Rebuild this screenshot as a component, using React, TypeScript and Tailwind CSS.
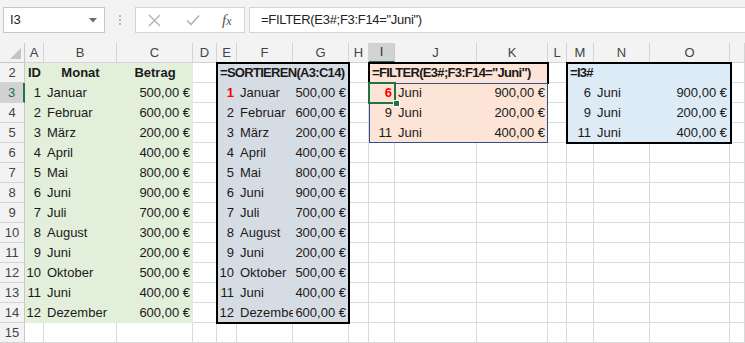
import React from "react";
import clsx from "clsx";

const COLS = ["A", "B", "C", "D", "E", "F", "G", "H", "I", "J", "K", "L", "M", "N", "O", ""];

const MONTHS: [number, string, string][] = [
  [1, "Januar", "500,00 €"],
  [2, "Februar", "600,00 €"],
  [3, "März", "200,00 €"],
  [4, "April", "400,00 €"],
  [5, "Mai", "800,00 €"],
  [6, "Juni", "900,00 €"],
  [7, "Juli", "700,00 €"],
  [8, "August", "300,00 €"],
  [9, "Juni", "200,00 €"],
  [10, "Oktober", "500,00 €"],
  [11, "Juni", "400,00 €"],
  [12, "Dezember", "600,00 €"],
];

const FILTERED: [number, string, string][] = [
  [6, "Juni", "900,00 €"],
  [9, "Juni", "200,00 €"],
  [11, "Juni", "400,00 €"],
];

type Cell = {
  text?: React.ReactNode;
  align?: "left" | "right" | "center";
  bold?: boolean;
  span3?: boolean;
  tight?: boolean;
};

function fillFor(col: number, row: number): string | null {
  if (col <= 2 && row >= 2 && row <= 14) return "bg-[#e2efda]";
  if (col >= 4 && col <= 6 && row >= 2 && row <= 14) return "bg-[#d6dce4]";
  if (col >= 8 && col <= 10 && row >= 2 && row <= 5) return "bg-[#fce4d6]";
  if (col >= 12 && col <= 14 && row >= 2 && row <= 5) return "bg-[#ddebf7]";
  return null;
}

function Red({ children }: { children: React.ReactNode }) {
  return <span className="font-bold text-[#ff0000]">{children}</span>;
}

function cellsFor(row: number): Record<number, Cell> {
  const c: Record<number, Cell> = {};
  if (row === 2) {
    c[0] = { text: "ID", bold: true };
    c[1] = { text: "Monat", bold: true, align: "center" };
    c[2] = { text: "Betrag", bold: true, align: "center" };
    // formulas spill over the empty cells to their right
    c[4] = { text: "=SORTIEREN(A3:C14)", bold: true, span3: true, tight: true };
    c[8] = { text: '=FILTER(E3#;F3:F14="Juni")', bold: true, span3: true, tight: true };
    c[12] = { text: "=I3#", bold: true, span3: true, tight: true };
    return c;
  }
  const m = MONTHS[row - 3];
  if (m) {
    c[0] = { text: m[0], align: "right" };
    c[1] = { text: m[1] };
    c[2] = { text: m[2], align: "right" };
    c[4] = { text: row === 3 ? <Red>1</Red> : m[0], align: "right" };
    c[5] = { text: m[1] };
    c[6] = { text: m[2], align: "right" };
  }
  const f = FILTERED[row - 3];
  if (f) {
    c[8] = { text: row === 3 ? <Red>6</Red> : f[0], align: "right" };
    c[9] = { text: f[1] };
    c[10] = { text: f[2], align: "right" };
    c[12] = { text: f[0], align: "right" };
    c[13] = { text: f[1] };
    c[14] = { text: f[2], align: "right" };
  }
  return c;
}

const GRID =
  "grid grid-cols-[25px_19px_73px_76px_24px_20px_56px_56px_20px_26px_82px_71px_19px_27px_56px_80px_1fr]";

function SheetRow({ row }: { row: number }) {
  const cells = cellsFor(row);
  const out: React.ReactNode[] = [];
  for (let col = 0; col < 16; col++) {
    const cell = cells[col] ?? {};
    const fill = fillFor(col, row);
    out.push(
      <div
        key={col}
        className={clsx(
          "flex h-5 items-center overflow-hidden whitespace-nowrap px-[3px]",
          fill ?? "border-r border-b border-[#dadada]",
          cell.span3 && "col-span-3",
          cell.align === "right" && "justify-end",
          cell.align === "center" && "justify-center",
          cell.bold && "font-bold",
          cell.tight && "tracking-[-0.7px]"
        )}
      >
        {cell.text}
      </div>
    );
    if (cell.span3) col += 2;
  }
  const selected = row === 3;
  return (
    <div className={GRID}>
      <div
        className={clsx(
          "flex h-5 items-center justify-center border-b border-[#d4d4d4]",
          selected
            ? "border-r-2 border-r-[#217346] bg-[#d2d2d2] text-[#217346]"
            : "border-r border-r-[#c8c8c8] bg-[#f3f3f3] text-[#444]"
        )}
      >
        {row}
      </div>
      {out}
    </div>
  );
}

function HeaderRow() {
  return (
    <div className={GRID}>
      <div className="relative h-5 border-r border-b border-[#c8c8c8] bg-[#f3f3f3]">
        <svg className="absolute right-[3px] bottom-[3px]" width="11" height="11" viewBox="0 0 11 11">
          <path d="M11 0 L11 11 L0 11 Z" fill="#c4c4c4" />
        </svg>
      </div>
      {COLS.map((c, i) => (
        <div
          key={i}
          className={clsx(
            "flex h-5 items-center justify-center",
            c === "I"
              ? "border-r border-r-[#c8c8c8] border-b-2 border-b-[#217346] bg-[#d2d2d2] text-[#333]"
              : "border-r border-b border-[#d4d4d4] bg-[#f3f3f3] text-[#444]"
          )}
        >
          {c}
        </div>
      ))}
    </div>
  );
}

function FormulaBar() {
  return (
    <div className="flex h-[43px] items-start gap-0 bg-[#f3f3f3] pt-[7px]">
      <div className="ml-[3px] flex h-[26px] w-[102px] items-center justify-between border border-[#c6c6c6] bg-white pr-[7px] pl-[6px] text-[13px] text-[#222]">
        <span>I3</span>
        <svg width="8" height="5" viewBox="0 0 8 5">
          <path d="M0 0 L8 0 L4 4.5 Z" fill="#6b6b6b" />
        </svg>
      </div>
      <div className="flex h-[26px] w-[30px] flex-col items-center justify-center gap-[2px]">
        <span className="h-[2px] w-[2px] bg-[#b8b8b8]" />
        <span className="h-[2px] w-[2px] bg-[#b8b8b8]" />
        <span className="h-[2px] w-[2px] bg-[#b8b8b8]" />
      </div>
      <div className="flex h-[26px] w-[110px] items-center border border-[#d4d4d4] bg-white">
        <svg className="ml-[12px]" width="13" height="13" viewBox="0 0 13 13">
          <path d="M1 1 L12 12 M12 1 L1 12" stroke="#b3b3b3" strokeWidth="1.4" fill="none" />
        </svg>
        <svg className="ml-[25px]" width="14" height="12" viewBox="0 0 14 12">
          <path d="M1 6.5 L5 10.5 L13 1.5" stroke="#b3b3b3" strokeWidth="1.6" fill="none" />
        </svg>
        <span className="ml-[22px] font-['Liberation_Serif',serif] text-[15px] italic text-[#555]">
          f<span className="text-[12px]">x</span>
        </span>
      </div>
      <div className="ml-[4px] flex h-[26px] flex-1 items-center border border-r-0 border-[#d4d4d4] bg-white pl-[11px] text-[13px] tracking-[-0.3px] text-[#222]">
        =FILTER(E3#;F3:F14="Juni")
      </div>
    </div>
  );
}

export default function App() {
  const rows = Array.from({ length: 14 }, (_, i) => i + 2);
  return (
    <div className="h-[343px] w-[745px] overflow-hidden bg-white font-['Liberation_Sans',Arial,sans-serif] text-[13px] text-[#1a1a1a]">
      <FormulaBar />
      <div className="relative">
        <HeaderRow />
        {rows.map((r) => (
          <SheetRow key={r} row={r} />
        ))}

        {/* range borders and selection drawn over the cells */}
        <div className="pointer-events-none absolute top-[19px] left-[216px] h-[262px] w-[134px] border-2 border-black" />
        <div className="pointer-events-none absolute top-[19px] left-[368px] h-[22px] w-[181px] border-2 border-b-0 border-black" />
        <div className="pointer-events-none absolute top-[40px] left-[369px] h-[60px] w-[179px] border border-[#2f4f8f]" />
        <div className="pointer-events-none absolute top-[19px] left-[566px] h-[82px] w-[166px] border-2 border-black" />
        <div className="pointer-events-none absolute top-[39px] left-[368px] h-[22px] w-[28px] border-2 border-[#217346]" />
        <div className="pointer-events-none absolute top-[57px] left-[393px] h-[7px] w-[7px] border border-white bg-[#217346]" />
      </div>
    </div>
  );
}
